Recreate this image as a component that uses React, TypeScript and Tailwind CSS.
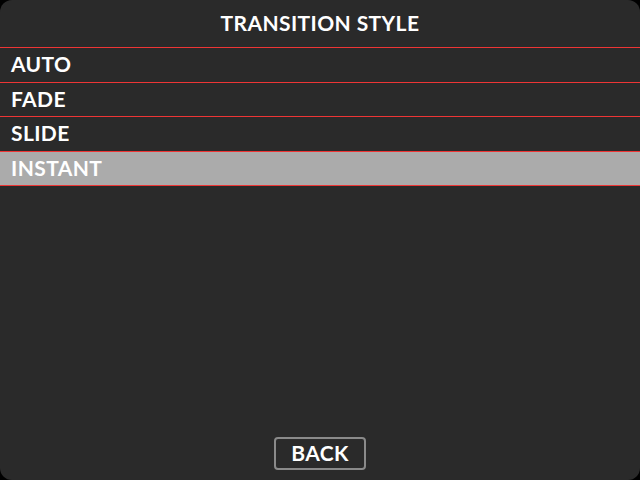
const options = [
  { label: "AUTO", h: "h-[35px]", selected: false },
  { label: "FADE", h: "h-[34px]", selected: false },
  { label: "SLIDE", h: "h-[35px]", selected: false },
  { label: "INSTANT", h: "h-[34px]", selected: true },
];

export default function App() {
  return (
    <div
      className="w-[640px] h-[480px] bg-black"
      style={{ fontFamily: "Lato, 'Open Sans', sans-serif" }}
    >
      <div className="relative w-full h-full rounded-[12px] bg-[#2a2a2a] flex flex-col overflow-hidden">
        {/* Title */}
        <div className="h-[47px] pb-[2px] flex items-center justify-center text-white font-bold text-[21px] tracking-[0.4px]">
          TRANSITION STYLE
        </div>

        {/* Option list */}
        <div className="flex flex-col border-b border-[#ee3535]">
          {options.map((opt) => (
            <div
              key={opt.label}
              className={`${opt.h} border-t border-[#ee3535] flex items-center pl-[11px] pb-[2px] text-white font-bold text-[21px] tracking-[0.4px] ${
                opt.selected ? "bg-[#ababab]" : ""
              }`}
            >
              {opt.label}
            </div>
          ))}
        </div>

        <div className="flex-1" />

        {/* Back */}
        <div className="flex justify-center pb-[10px]">
          <button className="w-[92px] h-[33px] pb-[1px] border-2 border-[#8a8a8a] rounded-[4px] text-white font-bold text-[21px] tracking-[0.4px] flex items-center justify-center">
            BACK
          </button>
        </div>
      </div>
    </div>
  );
}
